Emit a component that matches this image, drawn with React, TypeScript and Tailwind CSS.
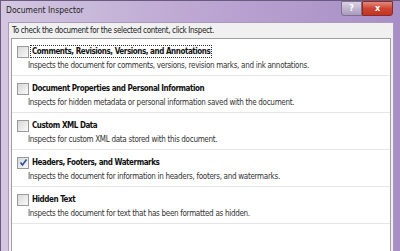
import React from 'react';

const items = [
  {
    title: 'Comments, Revisions, Versions, and Annotations',
    desc: 'Inspects the document for comments, versions, revision marks, and ink annotations.',
    checked: false,
    focused: true,
  },
  {
    title: 'Document Properties and Personal Information',
    desc: 'Inspects for hidden metadata or personal information saved with the document.',
    checked: false,
  },
  {
    title: 'Custom XML Data',
    desc: 'Inspects for custom XML data stored with this document.',
    checked: false,
  },
  {
    title: 'Headers, Footers, and Watermarks',
    desc: 'Inspects the document for information in headers, footers, and watermarks.',
    checked: true,
  },
  {
    title: 'Hidden Text',
    desc: 'Inspects the document for text that has been formatted as hidden.',
    checked: false,
  },
];

function CheckBox({ checked }: { checked: boolean }) {
  return (
    <div className="w-[12px] h-[12px] border border-[#9a9a9a] bg-gradient-to-br from-[#d8d8d8] to-[#fafafa] flex items-center justify-center shrink-0">
      {checked && (
        <svg width="9" height="9" viewBox="0 0 9 9">
          <path d="M1.5 4.5 L3.5 7 L7.5 1.5" fill="none" stroke="#2a4f9e" strokeWidth="1.6" />
        </svg>
      )}
    </div>
  );
}

function App() {
  return (
    <div
      className="w-[400px] h-[251px] overflow-hidden flex flex-col bg-gradient-to-r from-[#d3c7e0] via-[#bca6d2] to-[#a88ec6] border-l border-t border-[#6b5a80]"
      style={{ fontFamily: '"DejaVu Sans Condensed", "DejaVu Sans", sans-serif' }}
    >
      {/* title bar */}
      <div className="h-[21px] flex items-start justify-between shrink-0">
        <div className="pl-[5px] pt-[5px] text-[8.5px] text-[#1e1e1e] leading-none">Document Inspector</div>
        <div className="flex mr-[7px] h-[15px]">
          <div className="w-[21px] h-[15px] border border-[#7d6f8d] rounded-bl-[3px] bg-gradient-to-b from-[#d9d1e3] to-[#a99bbc] flex items-center justify-center text-[9px] text-white font-bold leading-none">
            ?
          </div>
          <div className="w-[31px] h-[15px] border border-[#8a2a22] rounded-br-[3px] bg-gradient-to-b from-[#e3877c] via-[#cc4433] to-[#c33424] flex items-center justify-center text-[9px] text-white font-bold leading-none">
            x
          </div>
        </div>
      </div>

      {/* client area */}
      <div className="flex-1 ml-[7px] mr-[6px] bg-[#f0f0f0] border-l border-t border-r border-[#a999bb] pl-[2px] pr-[2px] flex flex-col">
        <div className="h-[15px] pt-[4px] text-[8px] text-[#222] leading-none pl-[1px] tracking-[-0.35px]">
          To check the document for the selected content, click Inspect.
        </div>
        <div className="flex-1 bg-white border border-[#a0a0a0] border-b-0">
          {items.map((it, i) => (
            <div key={i} className="h-[37px] border-b border-[#e6e6e6] pl-[5px] pt-[6px]">
              <div className="flex items-center h-[13px]">
                <CheckBox checked={it.checked} />
                <div
                  className={
                    'ml-[1px] px-[1px] text-[8px] font-bold text-[#111] leading-[11px] tracking-[-0.45px] border ' +
                    (it.focused ? 'border-dotted border-[#333]' : 'border-transparent')
                  }
                >
                  {it.title}
                </div>
              </div>
              <div className="mt-[4px] pl-[11px] text-[8px] text-[#333] leading-none tracking-[-0.3px]">{it.desc}</div>
            </div>
          ))}
        </div>
      </div>
    </div>
  );
}

export default App;
